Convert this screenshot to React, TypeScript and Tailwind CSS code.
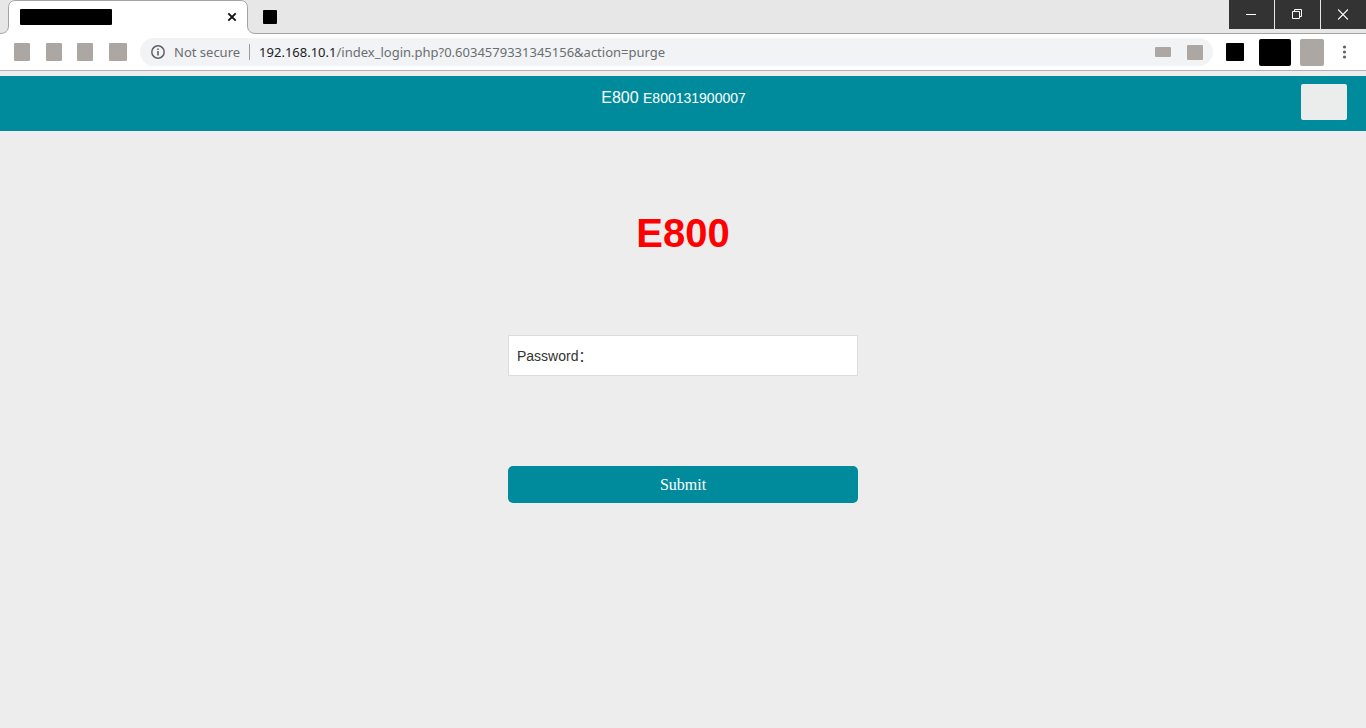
function TabShape() {
	return (
		<svg className="absolute inset-0" width="256" height="34" viewBox="0 0 256 34" fill="none">
			<path d="M0 33.5 C5 33.5 8.5 31 8.5 26 V8 C8.5 3 11 .5 16 .5 H240 C245 .5 247.5 3 247.5 8 V26 C247.5 31 251 33.5 256 33.5 V34 H0 Z" fill="#fff" />
			<path d="M0 33.5 C5 33.5 8.5 31 8.5 26 V8 C8.5 3 11 .5 16 .5 H240 C245 .5 247.5 3 247.5 8 V26 C247.5 31 251 33.5 256 33.5" stroke="#a3a3a3" />
		</svg>
	)
}

function TabStrip() {
	return (
		<div className="relative flex h-[34px] bg-[#e7e7e7]">
			<div className="absolute inset-x-0 bottom-0 h-px bg-[#a3a3a3]"></div>
			<div className="relative flex w-64 items-center justify-between pl-5 pr-[19px]">
				<TabShape />
				<div className="relative h-4 w-[92px] rounded-[1px] bg-black"></div>
				<button className="relative" aria-label="Close tab">
					<svg width="10" height="10" viewBox="0 0 10 10" stroke="#111" strokeWidth="1.9">
						<path d="M1.3 1.3 8.7 8.7M8.7 1.3 1.3 8.7" />
					</svg>
				</button>
			</div>
			<button className="relative ml-[7px] size-3.5 self-center rounded-[1px] bg-black" aria-label="New tab"></button>
			<div className="relative ml-auto flex h-[29px] gap-px bg-[#e7e7e7]">
				<button className="flex w-[45px] items-center justify-center bg-[#333] pr-px" aria-label="Minimize">
					<svg width="10" height="11" viewBox="0 0 10 11" stroke="#fff">
						<path d="M0 5.5H10" />
					</svg>
				</button>
				<button className="flex w-[45px] items-center justify-center bg-[#333] pr-px" aria-label="Restore">
					<svg width="10" height="11" viewBox="0 0 10 11" fill="none" stroke="#fff">
						<path d="M.5 2.5H7.5V9.5H.5ZM2.5 2.5V.5H9.5V7.5H7.5" />
					</svg>
				</button>
				<button className="flex w-[45px] items-center justify-center bg-[#333] pr-px" aria-label="Close window">
					<svg width="10" height="11" viewBox="0 0 10 11" stroke="#fff" strokeWidth="1.2">
						<path d="M0 .5 10 10.5M10 .5 0 10.5" />
					</svg>
				</button>
			</div>
		</div>
	)
}

function Toolbar() {
	return (
		<div className="flex h-[37px] items-center border-b border-[#b0b0b0] bg-white pl-3.5 pr-[19px]">
			<div className="flex w-[113px] justify-between">
				<button className="h-[18px] w-4 rounded-[1px] bg-[#ada7a4]" aria-label="Back"></button>
				<button className="h-[18px] w-4 rounded-[1px] bg-[#ada7a4]" aria-label="Forward"></button>
				<button className="h-[18px] w-4 rounded-[1px] bg-[#ada7a4]" aria-label="Reload"></button>
				<button className="h-[18px] w-[18px] rounded-[1px] bg-[#ada7a4]" aria-label="Home"></button>
			</div>
			<div className="ml-[13px] flex h-7 flex-1 items-center rounded-full bg-[#f1f3f4] pl-[11px] pr-2.5 font-['Noto_Sans',sans-serif] text-[13px] leading-[22px] text-[#6b6e72]">
				<svg width="14" height="14" viewBox="0 0 14 14" fill="none" stroke="#5f6368" strokeWidth="1.5">
					<circle cx="7" cy="7" r="6.2" />
					<path d="M7 6V10.5M7 3.4V5" strokeWidth="1.6" />
				</svg>
				<span className="ml-[9px]">Not secure</span>
				<span className="mx-[9px] h-4 w-px bg-[#9a9da0]"></span>
				<span className="flex-1"><span className="text-[#202124]">192.168.10.1</span>/index_login.php?0.6034579331345156&amp;action=purge</span>
				<button className="mr-4 h-2.5 w-4 rounded-[1px] bg-[#ada7a4]" aria-label="Saved passwords"></button>
				<button className="h-[15px] w-4 rounded-[1px] bg-[#ada7a4]" aria-label="Bookmark"></button>
			</div>
			<button className="ml-[13px] size-[18px] rounded-[1px] bg-black" aria-label="Extension"></button>
			<button className="ml-[15px] h-[27px] w-8 rounded-[2px] bg-black" aria-label="Extensions"></button>
			<button className="ml-[9px] h-[27px] w-6 rounded-[2px] bg-[#ada7a4]" aria-label="Profile"></button>
			<button className="ml-[18px]" aria-label="Menu">
				<svg width="5" height="14" viewBox="0 0 5 14" fill="#5f6368">
					<circle cx="2.5" cy="2" r="1.6" />
					<circle cx="2.5" cy="7" r="1.6" />
					<circle cx="2.5" cy="12" r="1.6" />
				</svg>
			</button>
		</div>
	)
}

export default function App() {
	return (
		<div className="min-h-screen bg-[#ededed] font-['Liberation_Sans',Arial,sans-serif]">
			<TabStrip />
			<Toolbar />
			<header className="mt-[5px] flex h-[55px] items-start bg-[#008b9d] pr-[19px] pt-2 text-white">
				<p className="flex-1 pl-[46px] text-center text-base leading-7">E800 <span className="text-sm">E800131900007</span></p>
				<button className="h-9 w-[46px] rounded-[2px] bg-[#ebedec]" aria-label="Language"></button>
			</header>
			<main className="mx-auto flex w-full max-w-[350px] flex-col pt-[78px]">
				<h1 className="text-center text-[40px] font-bold leading-[48px] text-[#f00]">E800</h1>
				<form className="mt-[78px] flex flex-col" onSubmit={(e) => e.preventDefault()}>
					<div className="flex h-[41px] items-center border border-[#dcdcdc] bg-white px-2 text-sm text-[#333]">
						<label htmlFor="password" className="font-['Liberation_Sans','Noto_Sans_CJK_SC',sans-serif]">Password：</label>
						<input id="password" type="password" className="h-full min-w-0 flex-1 outline-none" />
					</div>
					<button type="submit" className="mt-[90px] h-[37px] rounded-[5px] bg-[#008b9d] font-['Liberation_Serif',serif] text-base text-white">Submit</button>
				</form>
			</main>
		</div>
	)
}
